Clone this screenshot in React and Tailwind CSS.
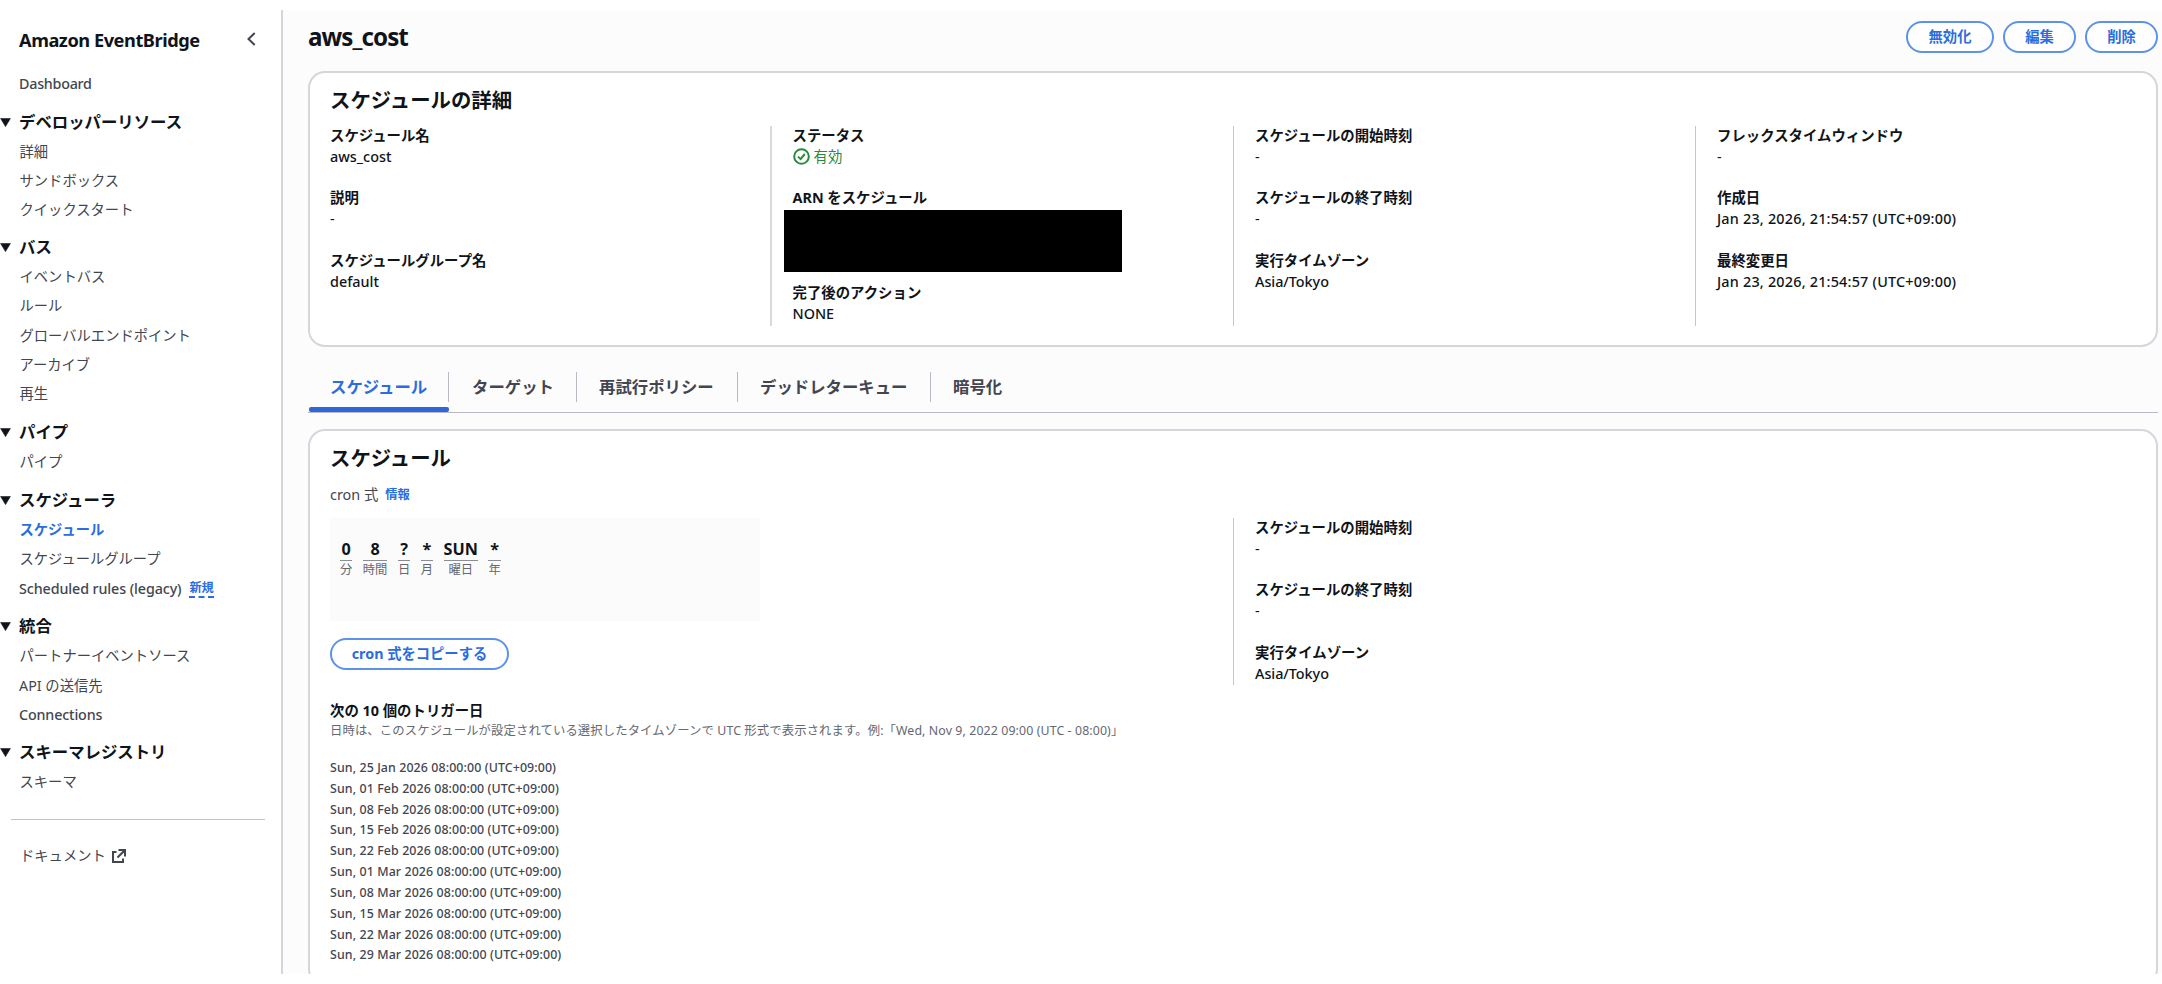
import React from "react";

const NAV_ITEM = "flex h-[29px] items-center pl-[19.5px]";

function NavGroup({ title, className = "", children }) {
  return (
    <section className={className}>
      <h3 className="flex h-[30px] items-center text-[16.4px] font-bold text-[#0f141a]">
        <svg width="11" height="9" viewBox="0 0 11 9" className="mr-[8px] mt-px shrink-0" fill="#0f141a">
          <path d="M0.6 0.4h9.8L5.5 8.6z" stroke="#0f141a" strokeWidth="0.6" strokeLinejoin="round" />
        </svg>
        {title}
      </h3>
      <ul>{children}</ul>
    </section>
  );
}

function Sidebar() {
  return (
    <nav className="w-[283px] shrink-0 border-r-2 border-[#d5d6dd] bg-white text-[14.3px] text-[#424650]">
      <div className="flex h-[58px] items-center justify-between pl-[19px] pr-[25px] pt-1">
        <h2 className="text-[18.2px] font-bold tracking-[-0.45px] text-[#0f141a]">Amazon EventBridge</h2>
        <svg width="9" height="14" viewBox="0 0 9 14" fill="none" stroke="#424650" strokeWidth="2" className="mb-1">
          <path d="M7.7 1L1.5 7l6.2 6" />
        </svg>
      </div>
      <div className="mt-px flex h-[29px] items-center pl-[19px] font-medium tracking-[-0.25px]">Dashboard</div>
      <NavGroup title="デベロッパーリソース" className="mt-[9px] mb-2">
        <li className={NAV_ITEM}>詳細</li>
        <li className={NAV_ITEM}>サンドボックス</li>
        <li className={NAV_ITEM}>クイックスタート</li>
      </NavGroup>
      <NavGroup title="バス" className="mb-[9px]">
        <li className={NAV_ITEM}>イベントバス</li>
        <li className="flex h-[30px] items-center pl-[19.5px]">ルール</li>
        <li className="flex h-[29px] items-center pl-[19.5px]">グローバルエンドポイント</li>
        <li className={NAV_ITEM}>アーカイブ</li>
        <li className={NAV_ITEM}>再生</li>
      </NavGroup>
      <NavGroup title="パイプ" className="mb-[9px]">
        <li className={NAV_ITEM}>パイプ</li>
      </NavGroup>
      <NavGroup title="スケジューラ" className="mb-[7px]">
        <li className="flex h-[29px] items-center pl-[19.5px] font-bold text-[#2b6de0]">スケジュール</li>
        <li className={NAV_ITEM}>スケジュールグループ</li>
        <li className="flex h-[31px] items-center pl-[19px] font-medium tracking-[-0.1px]">
          Scheduled rules (legacy)
          <span className="ml-2 border-b-2 border-dashed border-[#2b6de0] text-[12.2px] leading-[16px] font-bold text-[#2b6de0]">新規</span>
        </li>
      </NavGroup>
      <NavGroup title="統合" className="mb-[8px]">
        <li className={NAV_ITEM}>パートナーイベントソース</li>
        <li className="flex h-[30px] items-center pt-px pl-[19px]">API の送信先</li>
        <li className="flex h-[29px] items-center pl-[19px] font-medium tracking-[-0.15px]">Connections</li>
      </NavGroup>
      <NavGroup title="スキーマレジストリ">
        <li className={NAV_ITEM}>スキーマ</li>
      </NavGroup>
      <hr className="mt-[23px] mr-4 ml-[11px] border-t border-[#c2c3cf]" />
      <div className="mt-[21px] flex h-[29px] items-center pl-5">
        ドキュメント
        <svg width="14" height="14" viewBox="0 0 14 14" fill="none" stroke="#424650" strokeWidth="2" className="ml-[6px]">
          <path d="M4.5 3H1v10h10V9.5M6.5 1H13v6.5M13 1L5.5 8.5" />
        </svg>
      </div>
    </nav>
  );
}

function PillButton({ children, className = "" }) {
  return (
    <button className={`flex h-8 items-center justify-center rounded-full border-2 border-[#5c92e8] bg-white text-[14.3px] font-bold text-[#2b6de0] ${className}`}>
      {children}
    </button>
  );
}

function Pair({ label, children, className = "mb-[18.5px]" }) {
  return (
    <div className={className}>
      <dt className="h-[22px] leading-[22px] font-bold">{label}</dt>
      <dd className="h-[22px] leading-[20px]">{children}</dd>
    </div>
  );
}

function ScheduleTimes() {
  return (
    <>
      <Pair label="スケジュールの開始時刻">-</Pair>
      <Pair label="スケジュールの終了時刻">-</Pair>
      <Pair label="実行タイムゾーン" className="">
        <span className="font-medium tracking-[-0.05px]">Asia/Tokyo</span>
      </Pair>
    </>
  );
}

const COL = "border-l border-[#c6c6cd] pl-[21px]";

function Details() {
  return (
    <section className="mt-[18px] h-[276px] rounded-[17px] border-2 border-[#d5d6dc] bg-white pl-5">
      <h2 className="mt-[13px] h-[28px] text-[20.4px] leading-[28px] font-bold">スケジュールの詳細</h2>
      <dl className="mt-3 grid h-[198px] grid-cols-[440px_463px_462px_1fr]">
        <div className="-mt-[1.5px]">
          <Pair label="スケジュール名"><span className="font-medium">aws_cost</span></Pair>
          <Pair label="説明">-</Pair>
          <Pair label="スケジュールグループ名"><span className="font-medium">default</span></Pair>
        </div>
        <div className="border-l-2 border-[#d8d9df] pl-[20.5px]">
          <div className="-mt-[1.5px]">
            <Pair label="ステータス">
              <span className="flex items-center text-[#2a8a3c]">
                <svg width="17" height="17" viewBox="0 0 17 17" fill="none" stroke="#2a8a3c" strokeWidth="2" className="mr-1">
                  <circle cx="8.5" cy="8.5" r="7.3" />
                  <path d="M5 8.6l2.6 2.5L11.8 6" />
                </svg>
                有効
              </span>
            </Pair>
            <Pair label="ARN をスケジュール" className="">
              <div className="mt-px -ml-[8.5px] h-[62px] w-[338px] bg-black" />
            </Pair>
            <Pair label="完了後のアクション" className="mt-[50px]"><span className="font-medium">NONE</span></Pair>
          </div>
        </div>
        <div className={COL}>
          <div className="-mt-[1.5px]">
            <ScheduleTimes />
          </div>
        </div>
        <div className={COL}>
          <div className="-mt-[1.5px]">
            <Pair label="フレックスタイムウィンドウ">-</Pair>
            <Pair label="作成日"><span className="font-medium tracking-[0.2px]">Jan 23, 2026, 21:54:57 (UTC+09:00)</span></Pair>
            <Pair label="最終変更日"><span className="font-medium tracking-[0.2px]">Jan 23, 2026, 21:54:57 (UTC+09:00)</span></Pair>
          </div>
        </div>
      </dl>
    </section>
  );
}

function Tabs() {
  return (
    <div className="mt-[25px] flex h-[41px] border-b border-[#b9bac4] text-[16.4px] font-bold text-[#424650]">
      <div className="flex w-[141px] flex-col text-[#2b6de0]">
        <div className="h-[30px] border-r border-[#b9bac4] pl-[22px] leading-[30px]">スケジュール</div>
        <div className="mt-[5px] ml-px h-[5px] rounded-[2px] bg-[#2c68d8]" />
      </div>
      <div className="h-[30px] w-[128px] border-r border-[#b9bac4] pl-[23px] leading-[30px]">ターゲット</div>
      <div className="h-[30px] w-[161px] border-r border-[#b9bac4] pl-[22px] leading-[30px]">再試行ポリシー</div>
      <div className="h-[30px] w-[193px] border-r border-[#b9bac4] pl-[22px] leading-[30px]">デッドレターキュー</div>
      <div className="h-[30px] pl-[22px] leading-[30px]">暗号化</div>
    </div>
  );
}

const CRON = [
  ["0", "分"],
  ["8", "時間"],
  ["?", "日"],
  ["*", "月"],
  ["SUN", "曜日"],
  ["*", "年"],
];

const TRIGGERS = ["25 Jan", "01 Feb", "08 Feb", "15 Feb", "22 Feb", "01 Mar", "08 Mar", "15 Mar", "22 Mar", "29 Mar"];

function Schedule() {
  return (
    <section className="mt-[16px] h-[557px] shrink-0 rounded-[17px] border-2 border-[#d5d6dc] bg-white pl-5">
      <h2 className="mt-[13px] h-[28px] text-[20.4px] leading-[28px] font-bold">スケジュール</h2>
      <div className="mt-[12px] flex h-[22px] items-center text-[#424650]">
        cron 式<span className="ml-[7px] text-[12.3px] font-bold text-[#2b6de0]">情報</span>
      </div>
      <div className="mt-[12px] grid grid-cols-[903px_1fr]">
        <div>
          <div className="flex h-[103px] w-[430px] gap-[10.5px] bg-[#fbfbfb] pt-[20px] pl-[10px]">
            {CRON.map(([value, unit], i) => (
              <div key={i} className="text-center">
                <div className="h-[22.5px] border-b border-[#8c8c94] text-[16.2px] leading-[22px] font-bold">{value}</div>
                <div className="text-[12.3px] leading-[17px] text-[#656871]">{unit}</div>
              </div>
            ))}
          </div>
          <PillButton className="mt-[17px] w-[179px]">cron 式をコピーする</PillButton>
        </div>
        <dl className={`h-[167px] ${COL}`}>
          <div className="-mt-[1.5px]">
            <ScheduleTimes />
          </div>
        </dl>
      </div>
      <h3 className="mt-[15px] h-[22px] leading-[22px] font-bold">次の 10 個のトリガー日</h3>
      <p className="h-[16px] text-[12.35px] leading-[17px] tracking-[0.11px] text-[#656871]">
        日時は、このスケジュールが設定されている選択したタイムゾーンで UTC 形式で表示されます。例:「Wed, Nov 9, 2022 09:00 (UTC - 08:00)」
      </p>
      <ul className="mt-[20px] text-[12.4px] leading-[20.83px] font-medium tracking-[0.1px] text-[#424650]">
        {TRIGGERS.map((d) => (
          <li key={d} className="h-[20.83px]">Sun, {d} 2026 08:00:00 (UTC+09:00)</li>
        ))}
      </ul>
    </section>
  );
}

export default function App() {
  return (
    <div className="h-[984px] w-[2162px] bg-white py-[10px] font-['Noto_Sans','Noto_Sans_CJK_JP',sans-serif] text-[14.4px] text-[#0f141a]">
      <div className="flex h-[964px] overflow-hidden">
        <Sidebar />
        <main className="flex-1 bg-[#fcfcfd] pr-1 pl-[25px]">
          <header className="flex h-[43px] items-end justify-between">
            <h1 className="text-[24.2px] leading-[32px] font-bold tracking-[-0.95px]">aws_cost</h1>
            <div className="flex gap-[9px]">
              <PillButton className="w-[88px]">無効化</PillButton>
              <PillButton className="w-[73px]">編集</PillButton>
              <PillButton className="w-[73px]">削除</PillButton>
            </div>
          </header>
          <Details />
          <Tabs />
          <Schedule />
        </main>
      </div>
    </div>
  );
}
